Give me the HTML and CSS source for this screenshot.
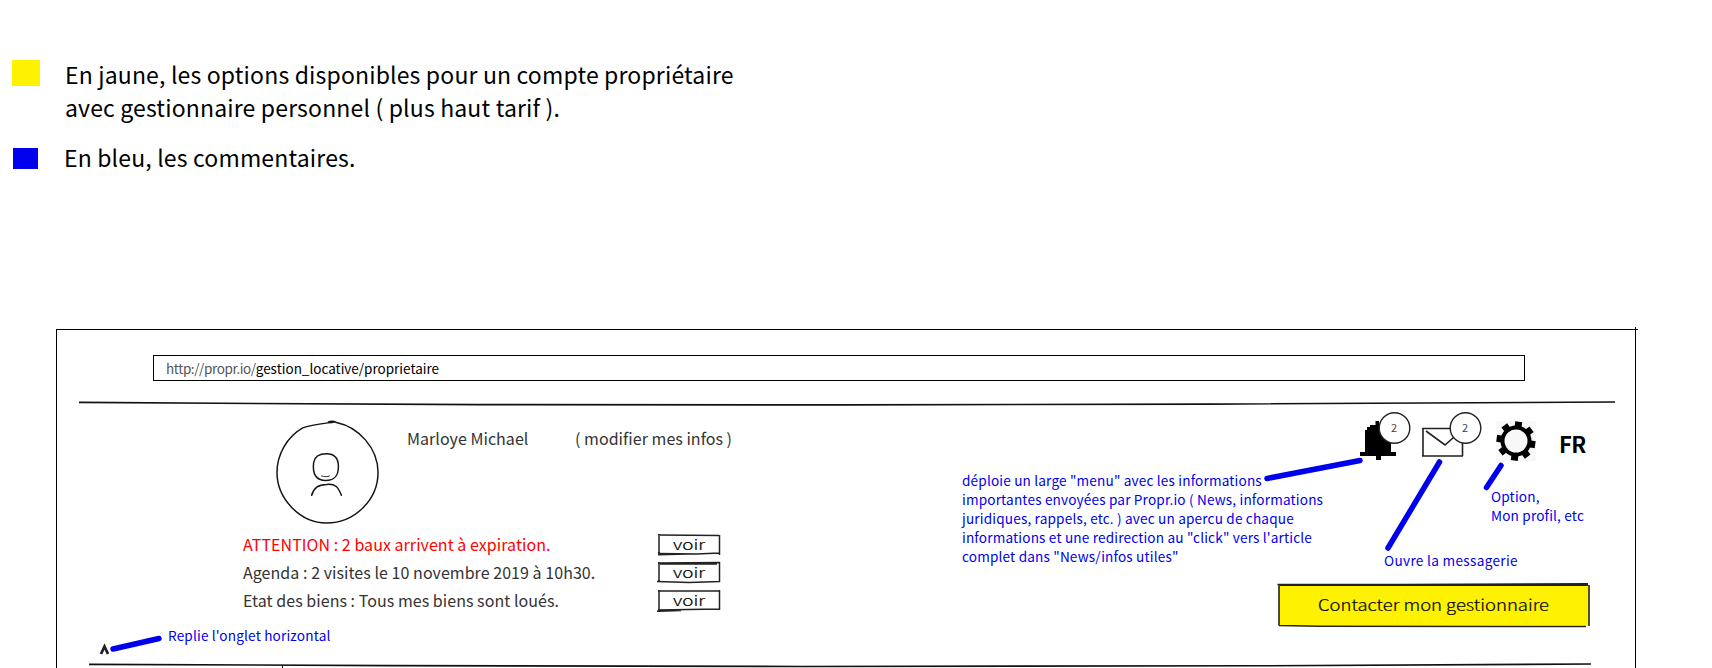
FILE: index.html
```html
<!DOCTYPE html>
<html lang="fr">
<head>
<meta charset="utf-8">
<title>Propr.io</title>
<link rel="stylesheet" href="styles.css">
</head>
<body>
<section class="legend">
  <div class="legend-row">
    <span class="swatch swatch-yellow"></span>
    <p class="legend-text">En jaune, les options disponibles pour un compte propriétaire<br>avec gestionnaire personnel ( plus haut tarif ).</p>
  </div>
  <div class="legend-row legend-row-blue">
    <span class="swatch swatch-blue"></span>
    <p class="legend-text legend-text-blue">En bleu, les commentaires.</p>
  </div>
</section>

<main class="frame">
  <div class="url"><span class="url-host">http://propr.io/</span><span class="url-path">gestion_locative/proprietaire</span></div>
  <svg class="divider" width="1536" height="8" viewBox="0 0 1536 8" fill="none" stroke="#111"><path stroke-width="1.6" d="M0 2.4 140 3.3 400 4.6 768 4.9 1130 4.1 1536 2"/></svg>

  <div class="content">
    <div class="account">
      <div class="profile">
        <svg class="avatar" width="107" height="107" viewBox="0 0 108 108" fill="none" stroke="#151515" stroke-width="1.5" stroke-linecap="round">
          <path d="M60 3C46 5 36 6 28 9 12 18 2 36 2 54c0 26 23 51 50 51 29 0 52-24 52-51C104 29 84 8 62 3.500c-3-1.500-6-1.500-8-.5"/>
          <path d="M39 44c1-7 7-9 13-9 8 0 12 5 12 13 0 10-4 14-13 14S37.500 56 39 44Z"/>
          <path stroke-width=".9" d="M47 57.500c3 1 6 1 8 0"/>
          <path d="M37 77c2-8 8-11 15-11 9-1 12 3 15 11"/>
        </svg>
        <div class="identity"><span class="name">Marloye Michael</span><span class="edit">( modifier mes infos )</span></div>
      </div>
      <ul class="alerts">
        <li><span class="attention">ATTENTION : 2 baux arrivent à expiration.</span>
          <svg width="64" height="23" viewBox="0 0 64 23" class="see"><path d="M1 2 62 2.500M2 1V21M62.500 2V22M1 20.500 40 21 62 20M1 21.700 30 21"/><text x="16" y="17" textLength="32" lengthAdjust="spacingAndGlyphs">voir</text></svg></li>
        <li><span>Agenda : 2 visites le 10 novembre 2019 à 10h30.</span>
          <svg width="64" height="23" viewBox="0 0 64 23" class="see"><path d="M1 2 63 1.600M3 3 60 3M2 1V21M62.500 1V21M0 20.500 32 21.500 63 20.500"/><text x="16" y="16.500" textLength="32" lengthAdjust="spacingAndGlyphs">voir</text></svg></li>
        <li><span>Etat des biens : Tous mes biens sont loués.</span>
          <svg width="64" height="23" viewBox="0 0 64 23" class="see"><path d="M1 2 30 2 63 2M2 1V21M62.500 1V21M1 21 62.500 20M0 22.300 24 21.500"/><text x="16" y="17" textLength="32" lengthAdjust="spacingAndGlyphs">voir</text></svg></li>
      </ul>
    </div>

    <div class="actions">
      <div class="toolbar">
        <svg width="52" height="50" viewBox="1359 410 52 50">
          <path d="M1375.500 421H1379V424H1391V452H1396V456H1381V460H1376V456H1360V452H1365V430H1367V427H1370V425H1375.500Z"/>
          <circle class="badge" cx="1394.500" cy="428" r="15.300"/><text class="count" x="1394" y="432" text-anchor="middle">2</text>
        </svg>
        <svg width="62" height="50" viewBox="1420 410 62 50">
          <path class="mail" d="M1422 428.500H1463M1423 428V456M1422 456 1463 456M1462.500 428V456M1426 431 1445 445 1462 430"/>
          <circle class="badge" cx="1465.500" cy="428" r="15.300"/><text class="count" x="1465" y="432" text-anchor="middle">2</text>
        </svg>
        <svg width="40" height="40" viewBox="-20 -20 40 40" class="gear">
          <rect x="-20" y="-20" width="40" height="40" fill="#f8f8f8"/>
          <g transform="rotate(8)"><path d="M-3.500-19.500h7l1 39h-7ZM-19.500-3.500v7l39 1v-7Z"/><path transform="rotate(45)" d="M-3.500-19.500h7v39h-7ZM-19.500-3.500v7h39v-7Z"/></g>
          <circle r="15.500"/><circle r="11.500" fill="#f8f8f8"/>
        </svg>
        <span class="lang">FR</span>
      </div>
      <svg class="contact" width="314" height="46" viewBox="1277 583 314 46">
        <path fill="#fff200" d="M1279 585.500H1588.500V625.500H1279Z"/>
        <path class="edge" d="M1277.500 584.500 1400 584.500 1588 583.800M1279 585V625.500M1589 585V626M1279 625.500 1320 626.300 1586 626.500M1280 585.300H1588"/>
        <text x="1318" y="611" textLength="231" lengthAdjust="spacingAndGlyphs">Contacter mon gestionnaire</text>
      </svg>
    </div>
  </div>
  <svg class="bottom-divider" width="1502" height="6" viewBox="89 662 1502 6" fill="none" stroke="#111"><path stroke-width="1.6" d="M89 664.400 390 665.600 800 666.500 1260 665.800 1591 664"/><path stroke-width="1" d="M282.500 665V668"/></svg>
</main>

<aside class="notes">
  <svg class="links" width="1712" height="668" viewBox="0 0 1712 668">
    <path class="frame-overrun" d="M1635.500 327V668M1635 329.500H1638"/>
    <path class="caret" d="M101 654 104.500 646.500 108 654"/>
    <path class="pointer" d="M1267 478.500 1360 460.500M1439.500 462 1388 548M1501 465.500 1486.500 487.500M113 649 159 638.500"/>
  </svg>
  <p class="note note-bell">déploie un large "menu" avec les informations<br>importantes envoyées par Propr.io ( News, informations<br>juridiques, rappels, etc. ) avec un apercu de chaque<br>informations et une redirection au "click" vers l'article<br>complet dans "News/infos utiles"</p>
  <p class="note note-option">Option,<br>Mon profil, etc</p>
  <p class="note note-mail">Ouvre la messagerie</p>
  <p class="note note-fold">Replie l'onglet horizontal</p>
</aside>
</body>
</html>
```
FILE: styles.css
```css
* { box-sizing: border-box; }
body {
  margin: 0;
  height: 668px;
  overflow: hidden;
  position: relative;
  background: #fff;
  color: #000;
  font-family: "Noto Sans CJK SC", "Noto Sans", sans-serif;
}
p, ul { margin: 0; padding: 0; }
svg { display: block; flex: none; }

.legend { height: 329px; padding: 58px 0 0 12px; }
.legend-row { display: flex; align-items: flex-start; }
.legend-row-blue { margin-top: 17px; padding-left: 1px; }
.swatch { flex: none; }
.swatch-yellow { width: 28px; height: 26px; margin-top: 2px; background: #fff200; }
.swatch-blue { width: 25px; height: 21px; margin-top: 7px; background: #0000ec; }
.legend-text { margin-left: 25px; font-size: 23px; letter-spacing: .16px; line-height: 33px; white-space: nowrap; }
.legend-text-blue { margin-left: 26px; }

.frame {
  width: 1580px;
  height: 340px;
  margin-left: 56px;
  border-top: 1px solid #000;
  border-left: 1px solid #000;
}
.url {
  display: flex;
  align-items: center;
  width: 1372px;
  height: 26px;
  margin: 25px 0 0 96px;
  padding: 0 0 0 12px;
  border: 1px solid #000;
  line-height: 20px;
  white-space: nowrap;
}
.url-host { font-size: 13.5px; letter-spacing: -.4px; color: #555; }
.url-path { font-size: 13.5px; }
.divider { margin: 19px 0 0 22px; }
.content { display: flex; height: 254px; }
.account { width: 1100px; padding-left: 186px; }
.profile { display: flex; padding: 11px 0 0 32px; height: 122px; color: #333; }
.identity { display: flex; padding-top: 7px; margin-left: 25px; font-size: 16px; letter-spacing: .04px; line-height: 24px; white-space: nowrap; }
.name { width: 168px; }
.alerts { list-style: none; color: #333; font-size: 16px; letter-spacing: .05px; }
.alerts li { display: flex; justify-content: space-between; align-items: center; width: 478px; height: 28px; line-height: 24px; white-space: nowrap; }
.attention { color: #f00; }
.see { fill: none; stroke: #222; stroke-width: 1.5; }
.see text, .contact text { font-family: "Noto Sans CJK SC", sans-serif; font-weight: 300; fill: #000; stroke: #000; stroke-width: .2; font-size: 14px; letter-spacing: 0; }

.toolbar { display: flex; height: 175px; padding: 2px 0 0 202px; }
.toolbar svg { margin-right: 9px; }
.toolbar .gear { margin: 11px 23px 0 5px; }
.badge { fill: #fff; stroke: #222; stroke-width: 1.4; }
.count { font-size: 11px; fill: #444; }
.mail { fill: none; stroke: #222; stroke-width: 1.6; }
.lang { margin-top: 17px; font-size: 22px; letter-spacing: -.5px; font-weight: 700; line-height: 33px; }
.contact { margin-left: 120px; }
.contact text { font-size: 15.5px; }
.edge { fill: none; stroke: #222; stroke-width: 1.6; }
.bottom-divider { margin-left: 32px; }

.notes { position: absolute; inset: 0; color: #0000ec; }
.links { position: absolute; inset: 0; fill: none; }
.frame-overrun { stroke: #000; stroke-width: 1; }
.caret { stroke: #222; stroke-width: 2.8; }
.pointer { stroke: #0000ec; stroke-width: 5.5; stroke-linecap: round; }
.note { position: absolute; font-size: 13.6px; letter-spacing: .17px; line-height: 19px; white-space: nowrap; }
.note-bell { left: 962px; top: 471px; }
.note-option { left: 1491px; top: 487px; }
.note-mail { left: 1384px; top: 551px; letter-spacing: .32px; }
.note-fold { left: 168px; top: 626px; }
```
